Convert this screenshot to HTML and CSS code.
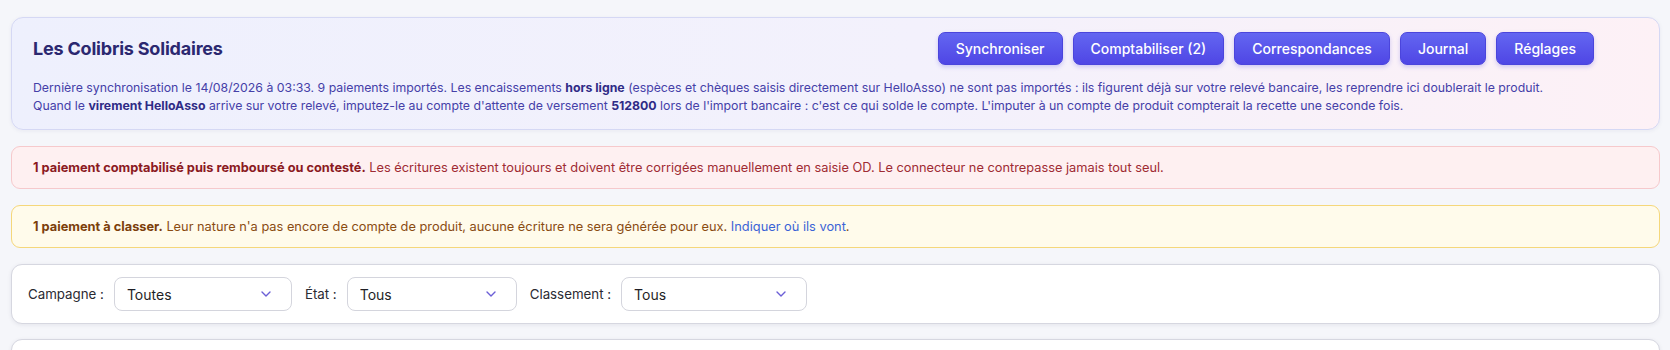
FILE: index.html
```html
<!DOCTYPE html>
<html lang="fr">
<head>
    <meta charset="UTF-8">
    <title>HelloAsso - Les Colibris Solidaires</title>
    <link rel="stylesheet" href="styles.css">
</head>
<body>

<main class="page">

    <section class="hero">
        <div class="hero-top">
            <h1>Les Colibris Solidaires</h1>
            <nav class="actions">
                <button class="btn">Synchroniser</button>
                <button class="btn">Comptabiliser (2)</button>
                <button class="btn">Correspondances</button>
                <button class="btn">Journal</button>
                <button class="btn">Réglages</button>
            </nav>
        </div>
        <p class="hero-text">
            Dernière synchronisation le 14/08/2026 à 03:33. 9 paiements importés. Les encaissements <strong>hors ligne</strong> (espèces et chèques saisis directement sur HelloAsso) ne sont pas importés : ils figurent déjà sur votre relevé bancaire, les reprendre ici doublerait le produit.<br>
            Quand le <strong>virement HelloAsso</strong> arrive sur votre relevé, imputez-le au compte d'attente de versement <strong>512800</strong> lors de l'import bancaire : c'est ce qui solde le compte. L'imputer à un compte de produit compterait la recette une seconde fois.
        </p>
    </section>

    <div class="alert alert-danger">
        <strong>1 paiement comptabilisé puis remboursé ou contesté.</strong> Les écritures existent toujours et doivent être corrigées manuellement en saisie OD. Le connecteur ne contrepasse jamais tout seul.
    </div>

    <div class="alert alert-warning">
        <strong>1 paiement à classer.</strong> Leur nature n'a pas encore de compte de produit, aucune écriture ne sera générée pour eux. <a href="#">Indiquer où ils vont</a>.
    </div>

    <section class="card filters">
        <label class="filter-label" for="f-campagne">Campagne :</label>
        <span class="select select-campagne">
            <select id="f-campagne"><option>Toutes</option></select>
            <svg class="chevron" width="10" height="6" viewBox="0 0 10 6"><path d="M1 1l4 4 4-4" fill="none" stroke="currentColor" stroke-width="1.4" stroke-linecap="round" stroke-linejoin="round"/></svg>
        </span>
        <label class="filter-label" for="f-etat">État :</label>
        <span class="select select-etat">
            <select id="f-etat"><option>Tous</option></select>
            <svg class="chevron" width="10" height="6" viewBox="0 0 10 6"><path d="M1 1l4 4 4-4" fill="none" stroke="currentColor" stroke-width="1.4" stroke-linecap="round" stroke-linejoin="round"/></svg>
        </span>
        <label class="filter-label" for="f-classement">Classement :</label>
        <span class="select select-classement">
            <select id="f-classement"><option>Tous</option></select>
            <svg class="chevron" width="10" height="6" viewBox="0 0 10 6"><path d="M1 1l4 4 4-4" fill="none" stroke="currentColor" stroke-width="1.4" stroke-linecap="round" stroke-linejoin="round"/></svg>
        </span>
    </section>

    <section class="card list"></section>

</main>

</body>
</html>
```

FILE: styles.css
```css
body {
    margin: 0;
    background: #f5f6fa;
    font-family: "Inter", "Noto Sans", sans-serif;
    color: #222;
}

.page {
    display: flex;
    flex-direction: column;
    gap: 16px;
    padding: 17px 10px 0 11px;
}

/* header card */
.hero {
    padding: 14px 21px 14px;
    border: 1px solid #d5d8f4;
    border-radius: 12px;
    background: linear-gradient(90deg, #eef0fd 0%, #f3f1fc 55%, #fdf1f6 100%);
    box-shadow: 0 1px 4px rgba(40, 40, 100, 0.06);
}

.hero-top {
    display: flex;
    align-items: center;
    justify-content: space-between;
    padding-right: 44px;
}

.hero-top h1 {
    margin: 0;
    font-size: 18px;
    font-weight: 700;
    color: #2b2870;
    letter-spacing: -0.2px;
}

.actions {
    display: flex;
    gap: 10px;
}

.btn {
    height: 33px;
    padding: 0 17px;
    border: 1px solid #4b45dc;
    border-radius: 7px;
    background: linear-gradient(180deg, #6366f1 0%, #4f46e5 100%);
    color: #fff;
    font-family: "Inter", "Noto Sans", sans-serif;
    font-size: 14px;
    font-weight: 500;
    box-shadow: 0 2px 4px rgba(79, 70, 229, 0.25);
}

.hero-text {
    margin: 14px 0 0;
    font-size: 12.3px;
    line-height: 18px;
    color: #4540a8;
}

.hero-text strong {
    color: #2f2b86;
    font-weight: 700;
}

/* alerts */
.alert {
    padding: 12px 21px;
    border: 1px solid;
    border-radius: 9px;
    font-size: 12.8px;
    line-height: 17px;
}

.alert-danger {
    background: #fef0f1;
    border-color: #f6c9cc;
    color: #9f2b33;
}

.alert-danger strong {
    color: #8b1a1f;
}

.alert-warning {
    background: #fffbeb;
    border-color: #f5d77a;
    color: #8a4b12;
}

.alert-warning strong {
    color: #7c3f0b;
}

.alert-warning a {
    color: #3b63d6;
    text-decoration: none;
}

/* filters */
.card {
    background: #fff;
    border: 1px solid #d6d7e0;
    border-radius: 11px;
    box-shadow: 0 1px 4px rgba(30, 30, 60, 0.08);
}

.filters {
    display: flex;
    align-items: center;
    padding: 12px 16px;
}

.filter-label {
    font-size: 13.3px;
    color: #2a2a33;
    margin-right: 10px;
}

.select {
    position: relative;
    margin-right: 13px;
}

.select select {
    appearance: none;
    height: 34px;
    padding: 0 12px;
    border: 1px solid #d4d5dd;
    border-radius: 8px;
    background: #fff;
    font-family: "Inter", "Noto Sans", sans-serif;
    font-size: 14px;
    color: #1f1f26;
}

.select-campagne select { width: 178px; }
.select-etat select { width: 170px; }
.select-classement select { width: 186px; }

.chevron {
    position: absolute;
    right: 21px;
    top: 14px;
    color: #6b5fd6;
    pointer-events: none;
}

.list {
    margin-top: -1px;
    height: 40px;
}
```
